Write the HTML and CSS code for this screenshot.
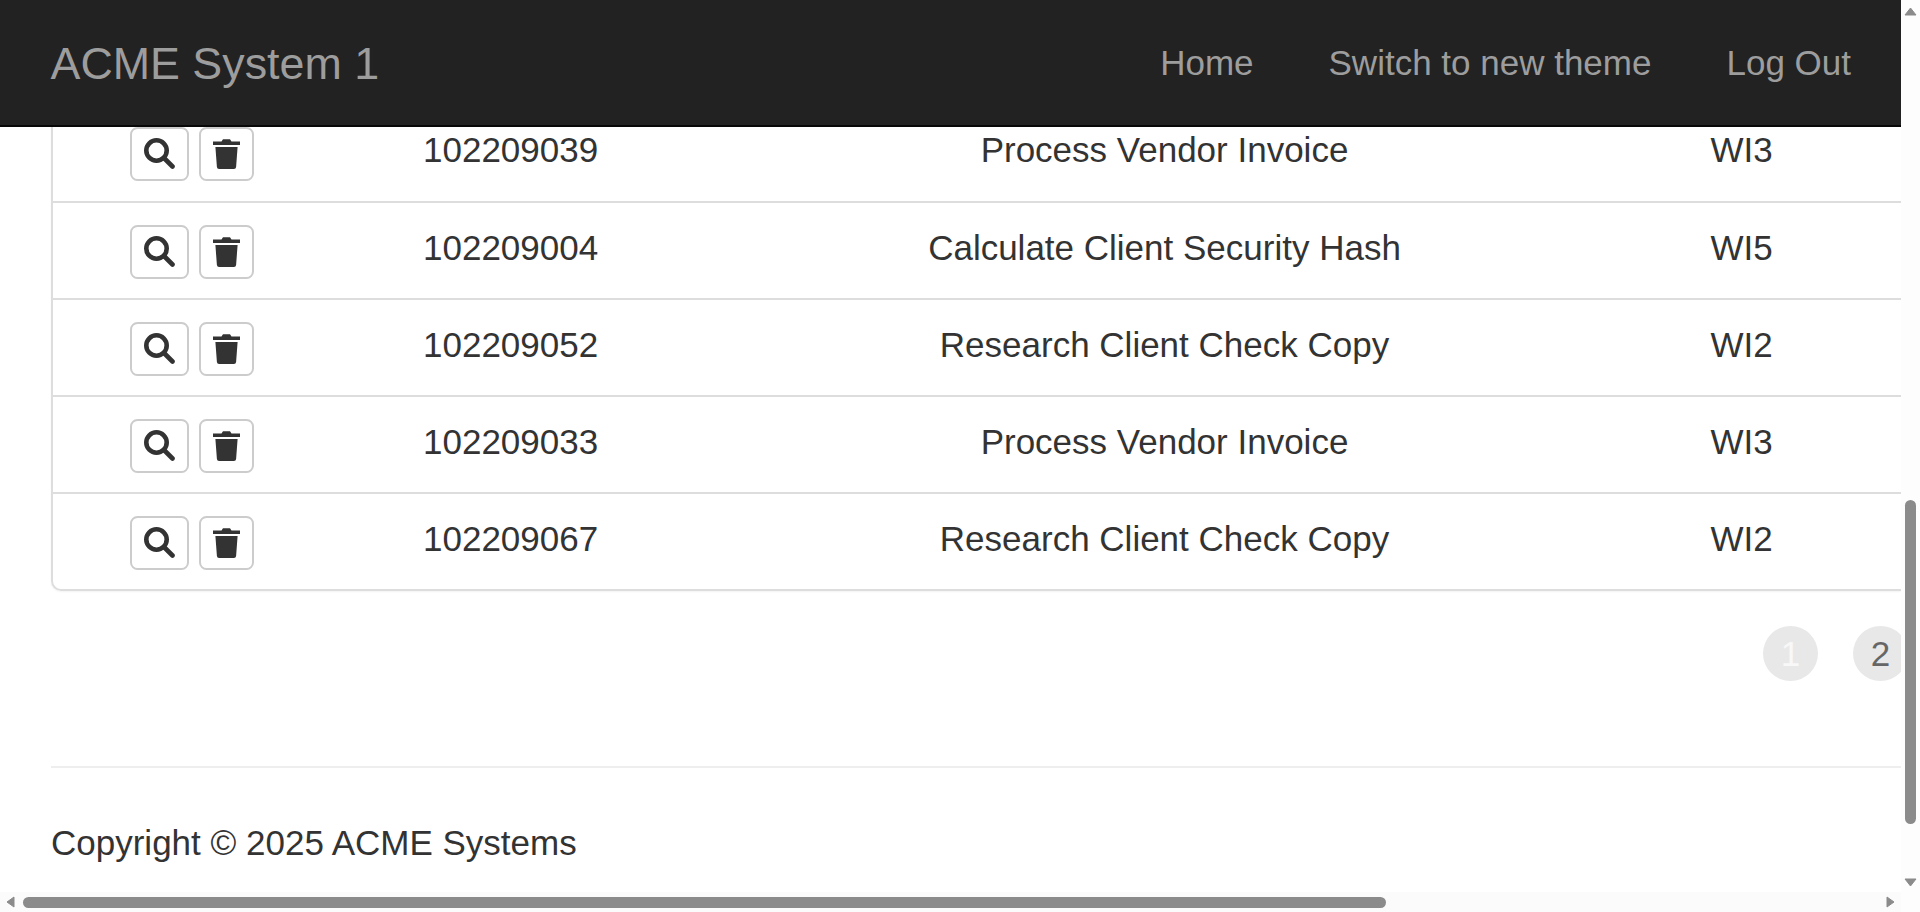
FILE: index.html
```html
<!DOCTYPE html>
<html lang="en">
<head>
<meta charset="utf-8">
<title>ACME System 1</title>
<link rel="stylesheet" href="styles.css">
</head>
<body>
<div class="window">
  <div class="page">
    <nav class="navbar">
      <a class="brand">ACME System 1</a>
      <div class="nav-links">
        <a class="nav-link">Home</a>
        <a class="nav-link">Switch to new theme</a>
        <a class="nav-link">Log Out</a>
      </div>
    </nav>
    <main class="content">
      <div class="panel">
        <table class="grid">
          <colgroup><col class="c1"><col class="c2"><col class="c3"><col class="c4"></colgroup>
          <tbody>
            <tr>
              <td class="actions"><div class="btns">
                <button class="btn btn-search"><svg class="i-search" viewBox="0 0 31 31"><circle cx="12.5" cy="12.5" r="10.2"/><path d="M20 20l8.500 8.500"/></svg></button>
                <button class="btn btn-trash"><svg class="i-trash" viewBox="0 0 27 31"><path d="M0 3.500h8.500L10 1.200h7l1.500 2.300H27V7H0zM2.400 9h22.200l-1.500 20a2.200 2.200 0 0 1-2.200 2H6.100a2.200 2.200 0 0 1-2.200-2z"/></svg></button>
              </div></td>
              <td>102209039</td><td class="center">Process Vendor Invoice</td><td>WI3</td>
            </tr>
            <tr>
              <td class="actions"><div class="btns">
                <button class="btn btn-search"><svg class="i-search" viewBox="0 0 31 31"><circle cx="12.5" cy="12.5" r="10.2"/><path d="M20 20l8.500 8.500"/></svg></button>
                <button class="btn btn-trash"><svg class="i-trash" viewBox="0 0 27 31"><path d="M0 3.500h8.500L10 1.200h7l1.500 2.300H27V7H0zM2.400 9h22.200l-1.500 20a2.200 2.200 0 0 1-2.200 2H6.100a2.200 2.200 0 0 1-2.200-2z"/></svg></button>
              </div></td>
              <td>102209004</td><td class="center">Calculate Client Security Hash</td><td>WI5</td>
            </tr>
            <tr>
              <td class="actions"><div class="btns">
                <button class="btn btn-search"><svg class="i-search" viewBox="0 0 31 31"><circle cx="12.5" cy="12.5" r="10.2"/><path d="M20 20l8.500 8.500"/></svg></button>
                <button class="btn btn-trash"><svg class="i-trash" viewBox="0 0 27 31"><path d="M0 3.500h8.500L10 1.200h7l1.500 2.300H27V7H0zM2.400 9h22.200l-1.500 20a2.200 2.200 0 0 1-2.200 2H6.100a2.200 2.200 0 0 1-2.200-2z"/></svg></button>
              </div></td>
              <td>102209052</td><td class="center">Research Client Check Copy</td><td>WI2</td>
            </tr>
            <tr>
              <td class="actions"><div class="btns">
                <button class="btn btn-search"><svg class="i-search" viewBox="0 0 31 31"><circle cx="12.5" cy="12.5" r="10.2"/><path d="M20 20l8.500 8.500"/></svg></button>
                <button class="btn btn-trash"><svg class="i-trash" viewBox="0 0 27 31"><path d="M0 3.500h8.500L10 1.200h7l1.500 2.300H27V7H0zM2.400 9h22.200l-1.500 20a2.200 2.200 0 0 1-2.200 2H6.100a2.200 2.200 0 0 1-2.200-2z"/></svg></button>
              </div></td>
              <td>102209033</td><td class="center">Process Vendor Invoice</td><td>WI3</td>
            </tr>
            <tr>
              <td class="actions"><div class="btns">
                <button class="btn btn-search"><svg class="i-search" viewBox="0 0 31 31"><circle cx="12.5" cy="12.5" r="10.2"/><path d="M20 20l8.500 8.500"/></svg></button>
                <button class="btn btn-trash"><svg class="i-trash" viewBox="0 0 27 31"><path d="M0 3.500h8.500L10 1.200h7l1.500 2.300H27V7H0zM2.400 9h22.200l-1.500 20a2.200 2.200 0 0 1-2.200 2H6.100a2.200 2.200 0 0 1-2.200-2z"/></svg></button>
              </div></td>
              <td>102209067</td><td class="center">Research Client Check Copy</td><td>WI2</td>
            </tr>
          </tbody>
        </table>
      </div>
      <div class="pager">
        <span class="page-dot current">1</span>
        <span class="page-dot">2</span>
      </div>
      <hr class="rule">
      <footer class="footer">Copyright © 2025 ACME Systems</footer>
    </main>
  </div>
  <div class="vbar">
    <svg class="arrow" viewBox="0 0 13 9"><path d="M6.500 1L12 8H1z"/></svg>
    <div class="vthumb"></div>
    <svg class="arrow down" viewBox="0 0 13 9"><path d="M1 1h11L6.500 8z"/></svg>
  </div>
  <div class="hbar">
    <svg class="harrow" viewBox="0 0 9 12"><path d="M8 1v10L1 6z"/></svg>
    <div class="hthumb"></div>
    <svg class="harrow right" viewBox="0 0 9 12"><path d="M1 1l7 5-7 5z"/></svg>
  </div>
  <div class="corner"></div>
</div>
</body>
</html>
```
FILE: styles.css
```css
* { box-sizing: border-box; }
html, body { margin: 0; height: 100%; overflow: hidden; }
body {
  font-family: "Liberation Sans", Arial, sans-serif;
  font-size: 35px;
  line-height: 50px;
  color: #333;
  background: #fff;
}
.window {
  display: grid;
  grid-template-columns: minmax(0, 1fr) 19px;
  grid-template-rows: minmax(0, 1fr) 20px;
  height: 912px;
}
.page { overflow: hidden; background: #fff; }
.navbar {
  position: relative;
  z-index: 2;
  display: flex;
  justify-content: space-between;
  align-items: center;
  height: 127px;
  padding: 1px 12.5px 0 50.500px;
  background: #222;
  border-bottom: 2.5px solid #080808;
}
.brand { font-size: 44.800px; color: #9d9d9d; }
.nav-links { display: flex; }
.nav-link { padding: 0 37.5px; color: #9d9d9d; }
.content { margin-top: -22px; padding-left: 51px; width: 2100px; }
.panel {
  border: 2.5px solid #ddd;
  border-top: 0;
  border-right: 0;
  border-radius: 0 0 0 10px;
  width: 1850px;
  height: 486px;
  box-shadow: 0 1px 2px rgba(0,0,0,.05);
  overflow: hidden;
}
.grid { border-collapse: collapse; table-layout: fixed; width: 1850px; }
.c1 { width: 370px; }
.c2 { width: 195.500px; }
.c3 { width: 1092px; }
.c4 { width: 192.500px; }
.grid td { padding: 20.400px 0 19.600px; height: 97px; vertical-align: top; border-bottom: 2.5px solid #ddd; }
.grid tr:last-child td { border-bottom: 0; }
.grid .center { text-align: center; }
.grid td.actions { padding: 21.500px 0 0; }
.btns { display: flex; gap: 10px; padding-left: 77px; }
.btn {
  display: flex;
  align-items: center;
  justify-content: center;
  height: 54px;
  padding: 0;
  background: #fff;
  border: 2.5px solid #ccc;
  border-radius: 7.5px;
}
.btn-search { width: 59px; }
.btn-trash { width: 54.500px; }
.i-search { width: 31px; height: 31px; fill: none; stroke: #333; stroke-width: 4.6; stroke-linecap: round; }
.i-trash { width: 27px; height: 31px; fill: #333; }
.pager { display: flex; gap: 35px; padding: 35px 0 0 1712px; height: 175px; }
.page-dot {
  display: flex;
  align-items: center;
  justify-content: center;
  flex: none;
  width: 55px;
  height: 55px;
  border-radius: 50%;
  background: #e8e8e8;
  color: #666;
}
.page-dot.current { color: #f8f8f8; }
.rule { margin: 0; width: 1850px; border: 0; border-top: 2.5px solid #eee; }
.footer { padding-top: 50px; }
.vbar {
  display: flex;
  flex-direction: column;
  align-items: center;
  background: #fdfdfd;
}
.arrow { flex: none; width: 13px; height: 9px; margin-top: 7px; fill: #8b8b8b; stroke: #8b8b8b; stroke-width: 1; stroke-linejoin: round; }
.arrow.down { margin-top: 54px; }
.vthumb { flex: none; width: 11px; height: 324px; margin-top: 484px; background: #8b8b8b; border-radius: 6px; }
.hbar {
  display: flex;
  align-items: center;
  padding-left: 6px;
  background: #fbfbfb;
}
.harrow { flex: none; width: 9px; height: 12px; fill: #8b8b8b; stroke: #8b8b8b; stroke-width: 1; stroke-linejoin: round; }
.harrow.right { margin-left: 500px; }
.hthumb { flex: none; width: 1363px; height: 11px; margin-left: 8px; background: #8b8b8b; border-radius: 6px; }
.corner { background: #fdfdfd; }
```
